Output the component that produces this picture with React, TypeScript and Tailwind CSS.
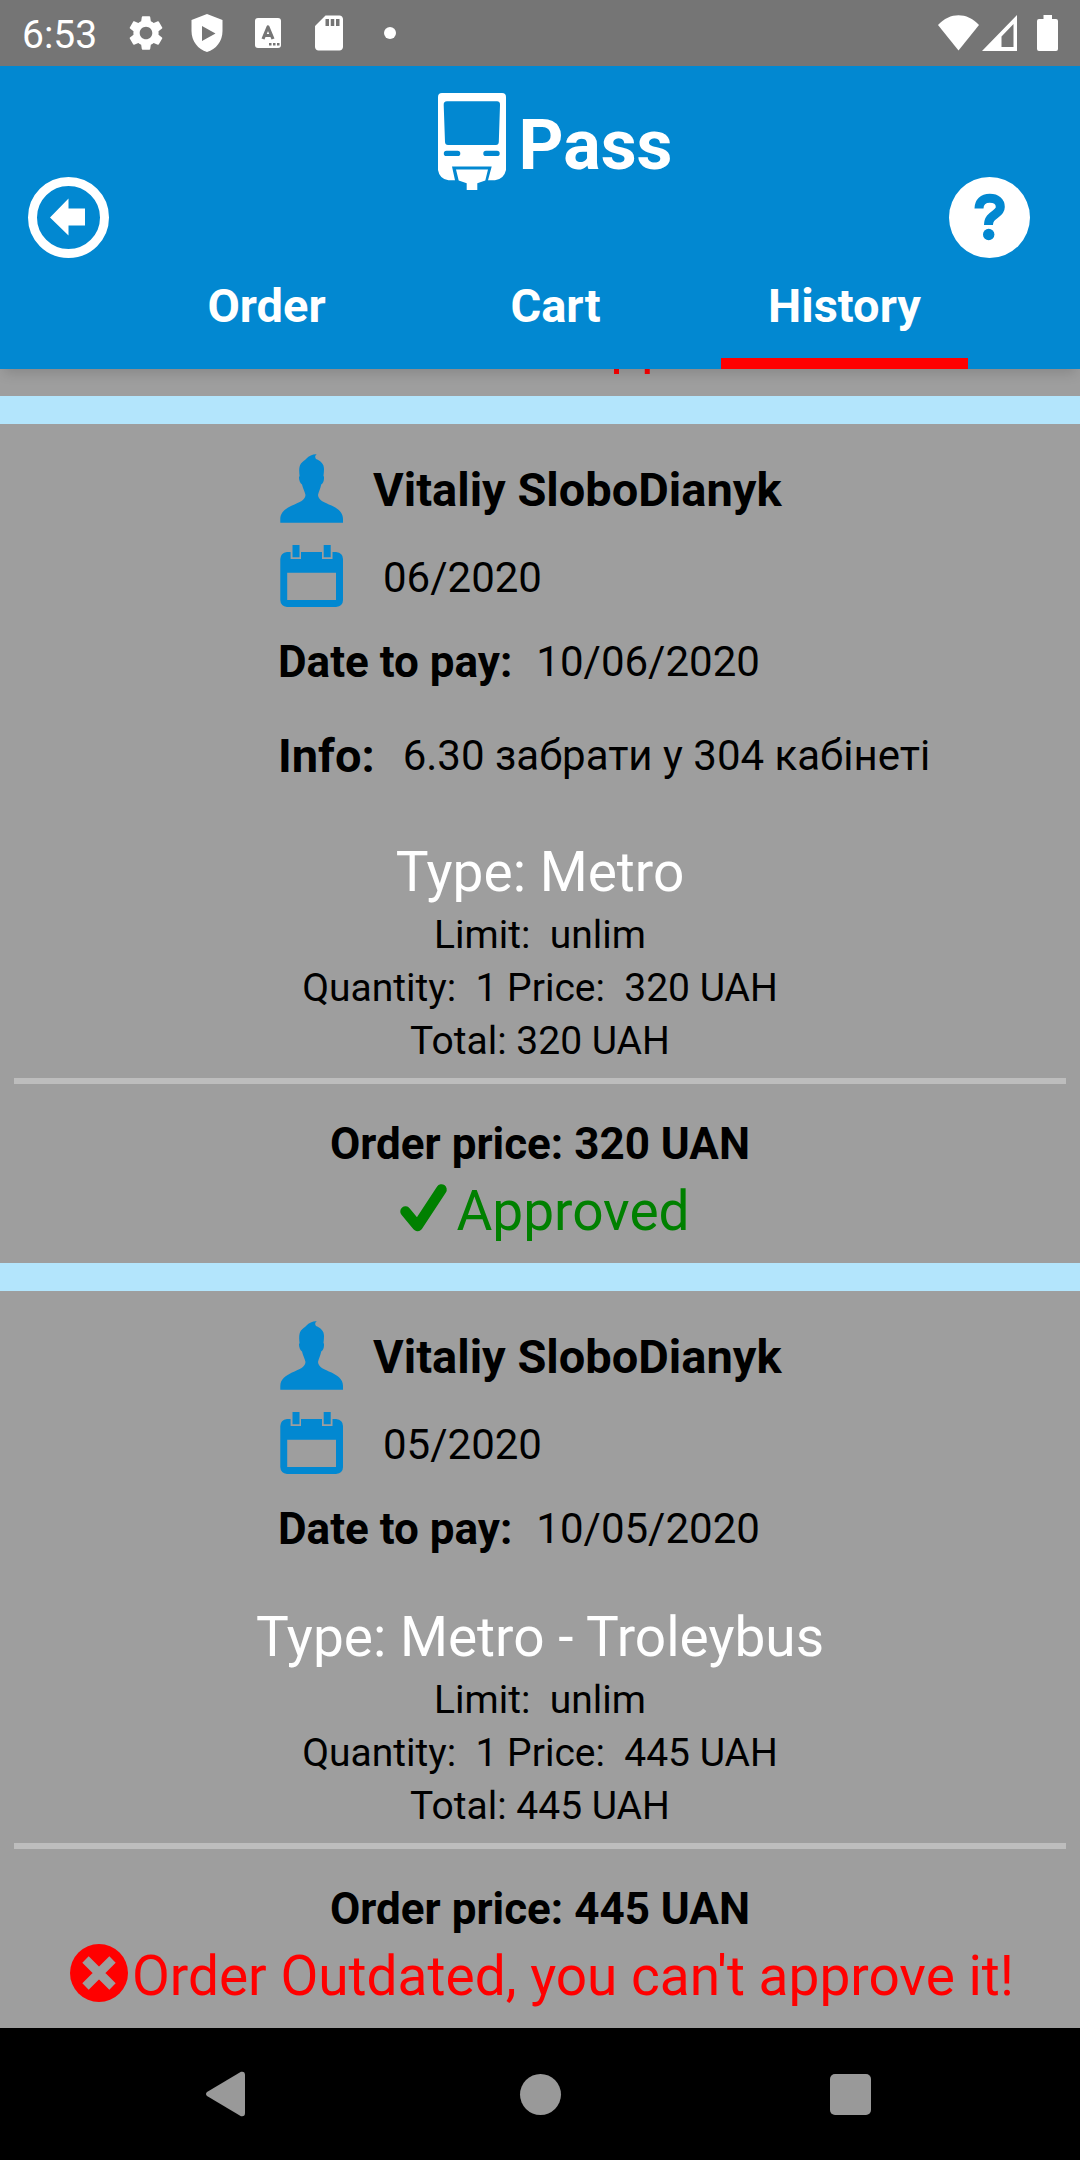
import React, { useState } from "react";
import { MdSettings, MdSdStorage } from "react-icons/md";

type Status = "approved" | "outdated" | "rejected";

type Order = {
  name: string;
  month: string;
  payBy: string;
  info?: string;
  type: string;
  limit: string;
  quantity: number;
  price: number;
  status: Status;
};

const ORDERS: Order[] = [
  {
    name: "Vitaliy SloboDianyk",
    month: "06/2020",
    payBy: "10/06/2020",
    info: "6.30 забрати у 304 кабінеті",
    type: "Metro",
    limit: "unlim",
    quantity: 1,
    price: 320,
    status: "approved",
  },
  {
    name: "Vitaliy SloboDianyk",
    month: "05/2020",
    payBy: "10/05/2020",
    type: "Metro - Troleybus",
    limit: "unlim",
    quantity: 1,
    price: 445,
    status: "outdated",
  },
];

const STATUS_TEXT: Record<Status, string> = {
  approved: "Approved",
  outdated: "Order Outdated, you can't approve it!",
  rejected: "Order not approved",
};

const TABS = ["Order", "Cart", "History"];

function StatusBar() {
  return (
    <div className="flex h-[66px] shrink-0 items-center bg-[#757575] px-[22px] text-white">
      <time className="w-[93px] pt-1 text-[39px] leading-[44px]">6:53</time>
      <div className="grid grid-cols-[repeat(5,61px)] items-center justify-items-center">
        <MdSettings className="size-[42px]" />
        <svg className="h-[38px] w-[32px]" viewBox="0 0 32 38" fill="currentColor">
          <path
            fillRule="evenodd"
            d="M16 0 31.500 6V17C31.500 27 25 35.500 16 38C7 35.500.5 27 .5 17V6ZM11 12V27L24.500 19.500Z"
          />
        </svg>
        <svg className="h-[30px] w-[26px]" viewBox="0 0 26 30">
          <rect width="26" height="30" rx="3" fill="currentColor" />
          <path
            d="M8 21 13 9 18 21M10 17.500H16"
            fill="none"
            stroke="#757575"
            strokeWidth="3.200"
            strokeLinejoin="round"
          />
          <path d="M14 25h2.500v2.500H14zM18 25h2.500v2.500H18zM22 25h2.500v2.500H22z" fill="#757575" />
        </svg>
        <MdSdStorage className="size-[42px]" />
        <span className="size-3 rounded-full bg-white" />
      </div>
      <div className="ml-auto flex items-center">
        <svg className="h-9 w-[41px]" viewBox="0 0 41 36" fill="currentColor">
          <path d="M20.500 35.500 0 10C12-3 29-3 41 10Z" />
        </svg>
        <svg className="ml-[3px] h-9 w-[35px]" viewBox="0 0 35 36" fill="currentColor">
          <path fillRule="evenodd" d="M35 0V36H0ZM31.500 9 19.500 21.500V32H31.500Z" />
        </svg>
        <svg className="ml-5 h-9 w-[21px]" viewBox="0 0 21 36" fill="currentColor">
          <path d="M6.500 0h8.500v4h4a2 2 0 0 1 2 2v28a2 2 0 0 1-2 2H2a2 2 0 0 1-2-2V6a2 2 0 0 1 2-2h4.500z" />
        </svg>
      </div>
    </div>
  );
}

function TrainLogo() {
  return (
    <svg className="h-[97px] w-[68px]" viewBox="0 0 68 97">
      <path
        fill="#fff"
        fillRule="evenodd"
        d="M4 0H64Q68 0 68 4V77Q66 86 57 87.300H50L53.700 73.500H14L17 87.300H10.500Q1.500 86 0 77V4Q0 0 4 0ZM9 8.300Q5.500 8.300 5.700 12L7 49Q7.200 52 10 52H58Q60.600 52 60.800 49L62 12Q62.200 8.300 59 8.300ZM8.500 57.700a2.700 2.700 0 0 0 0 5.400H19.600a2.700 2.700 0 0 0 0-5.400ZM48 57.700a2.700 2.700 0 0 0 0 5.400H59a2.700 2.700 0 0 0 0-5.400Z"
      />
      <path fill="#fff" d="M18 76.500H50L47.300 87.500 39.300 90.300V97H28.700V90.300L20.700 87.500Z" />
    </svg>
  );
}

function Header() {
  const [active, setActive] = useState("History");
  return (
    <header className="relative z-10 flex shrink-0 items-center bg-[#0288d1] text-white shadow-[0_8px_12px_-4px_rgba(0,0,0,0.15)]">
      <div className="w-[122px] pl-7">
        <button type="button" aria-label="Back" className="block">
          <svg className="size-[81px]" viewBox="0 0 81 81">
            <circle cx="40.500" cy="40.500" r="36" fill="none" stroke="#fff" strokeWidth="9" />
            <path fill="#fff" d="M22 40.500 40.500 21.500V31.500H57V48.500H40.500V58.500Z" />
          </svg>
        </button>
      </div>
      <div className="min-w-0 flex-1 pt-[27px]">
        <div className="flex items-end justify-center">
          <TrainLogo />
          <h1 className="ml-3 text-[70px] leading-[90px] font-bold">Pass</h1>
        </div>
        <nav className="mt-[52px] grid grid-cols-3" role="tablist">
          {TABS.map((tab) => (
            <button
              key={tab}
              type="button"
              role="tab"
              aria-selected={tab === active}
              onClick={() => setActive(tab)}
              className="relative h-[127px] text-[47px] leading-[56px] font-bold"
            >
              {tab}
              {tab === active && <span className="absolute inset-x-[21px] bottom-0 h-[11px] bg-[#ff0000]" />}
            </button>
          ))}
        </nav>
      </div>
      <div className="flex w-[91px] justify-end pr-[50px]">
        <button type="button" aria-label="Help" className="block shrink-0">
          <svg className="size-[81px]" viewBox="0 0 81 81">
            <circle cx="40.500" cy="40.500" r="40.500" fill="#fff" />
            <path
              d="M30 31.500C30 25 34 21.300 40.800 21.300C47.500 21.300 51.300 24.800 51.300 30C51.300 38 39.500 37 39.500 48"
              fill="none"
              stroke="#0288d1"
              strokeWidth="9"
            />
            <circle cx="39.700" cy="57.500" r="5.700" fill="#0288d1" />
          </svg>
        </button>
      </div>
    </header>
  );
}

function PersonIcon() {
  return (
    <svg className="h-[72px] w-[68px]" viewBox="0 0 68 72" fill="#0288d1">
      <path d="M2.300 68.700V65C2.300 58 8 54.500 14 51.500C21 48.500 27 46.500 27.500 41C27 38 25 35 24 30.500C22 29 21 26 21 23.500Q21 22.500 21.600 22C21 17 20.800 12.500 23 9.500C25 7 27 6.500 28.500 4.500C31 2 35 0 38.800.3C36.800 1.500 36.800 3.500 38 5C43 7 46 10 46 15C46 17 45.800 19.500 45.500 22Q46.200 22.500 46 24C46 27 45 29.500 43.200 30.500C42.500 35 40.500 38 40 41C40.500 46.500 46.500 48.500 53.500 51.500C59.500 54.500 65 58 65 65V68.700Z" />
    </svg>
  );
}

function CalendarIcon() {
  return (
    <svg className="h-[68px] w-[68px]" viewBox="0 0 68 68" fill="#0288d1">
      <path
        fillRule="evenodd"
        d="M9 8H12.600V15H23V8H44V15H54.500V8H58Q65 9 65 15V56Q65 62 58 63H9Q2.500 62 2.300 56V15Q2.500 9 9 8ZM9.200 28.700V56H58V28.700Z"
      />
      <path d="M14.500 1h7v12.200h-7zM45.700 1h7v12.200h-7z" />
    </svg>
  );
}

function StatusIcon({ status }: { status: Status }) {
  return (
    <svg className="h-[72px] w-[66px] shrink-0" viewBox="0 0 66 72">
      {status === "approved" && (
        <path
          d="M15.500 36.500 27.500 51 51.500 14.500"
          fill="none"
          stroke="#008000"
          strokeWidth="10.500"
          strokeLinecap="round"
          strokeLinejoin="round"
        />
      )}
      {status === "outdated" && (
        <>
          <circle cx="33" cy="33" r="29" fill="#ff0000" />
          <path d="M19.500 19.500 46.500 46.500M46.500 19.500 19.500 46.500" stroke="#9e9e9e" strokeWidth="9" />
        </>
      )}
      {status === "rejected" && (
        <path d="M15 15 51 51M51 15 15 51" stroke="#ff0000" strokeWidth="10" strokeLinecap="round" />
      )}
    </svg>
  );
}

function OrderStatus({ status }: { status: Status }) {
  return (
    <div
      className={`flex justify-center pb-4 text-[55px] leading-[72px] whitespace-nowrap ${
        status === "approved" ? "text-[#008000]" : "text-[#ff0000]"
      }`}
    >
      <StatusIcon status={status} />
      <p>{STATUS_TEXT[status]}</p>
    </div>
  );
}

function OrderCard({ order }: { order: Order }) {
  return (
    <article className="border-t-[28px] border-[#b3e5fc] bg-[#9e9e9e] pt-[30px]">
      <div className="ml-[25%] pl-2 whitespace-nowrap">
        <div className="flex items-center">
          <PersonIcon />
          <h2 className="ml-[27px] text-[47px] leading-[60px] font-bold">{order.name}</h2>
        </div>
        <div className="mt-[18px] flex items-center">
          <CalendarIcon />
          <p className="ml-[37px] text-[42px] leading-[60px]">{order.month}</p>
        </div>
        <dl>
          <div className="mt-5 flex items-center leading-[60px]">
            <dt className="text-[44px] font-bold">Date to pay:</dt>
            <dd className="ml-6 text-[42px]">{order.payBy}</dd>
          </div>
          {order.info && (
            <div className="mt-[34px] flex items-center pb-2 leading-[60px]">
              <dt className="text-[47px] font-bold">Info:</dt>
              <dd className="ml-7 text-[42px]">{order.info}</dd>
            </div>
          )}
        </dl>
      </div>
      <div className="mt-[42px] text-center text-[39px] leading-[53px] whitespace-pre">
        <h3 className="mb-px text-[55px] leading-[72px] text-white">Type: {order.type}</h3>
        <p>{`Limit:  ${order.limit}`}</p>
        <p>{`Quantity:  ${order.quantity} Price:  ${order.price} UAH`}</p>
        <p>{`Total: ${order.quantity * order.price} UAH`}</p>
      </div>
      <hr className="mx-[14px] mt-[10px] h-[6px] border-0 bg-[#bdbdbd]" />
      <p className="mt-[29px] text-center text-[44px] leading-[62px] font-bold">
        Order price: {order.quantity * order.price} UAN
      </p>
      <OrderStatus status={order.status} />
    </article>
  );
}

function NavigationBar() {
  return (
    <nav className="flex h-[132px] shrink-0 justify-center bg-black text-[#999999]">
      <button type="button" aria-label="System back" className="flex w-[310px] items-center justify-center">
        <svg className="h-[46px] w-12" viewBox="0 0 48 46" fill="currentColor">
          <path d="M1 21 35 .8Q39 0 39 4V42Q39 46 35 45.200L1 25Q-1 23 1 21Z" />
        </svg>
      </button>
      <button type="button" aria-label="Home" className="flex w-[310px] items-center justify-center">
        <span className="size-[41px] rounded-full bg-current" />
      </button>
      <button type="button" aria-label="Recent apps" className="flex w-[310px] items-center justify-center">
        <span className="size-[41px] rounded-[5px] bg-current" />
      </button>
    </nav>
  );
}

export default function App() {
  return (
    <div className="flex h-screen flex-col bg-[#9e9e9e] text-black [font-family:Roboto,sans-serif]">
      <StatusBar />
      <Header />
      <main className="flex min-h-0 flex-1 flex-col justify-end overflow-hidden">
        <OrderStatus status="rejected" />
        {ORDERS.map((order) => (
          <OrderCard key={order.month} order={order} />
        ))}
      </main>
      <NavigationBar />
    </div>
  );
}
